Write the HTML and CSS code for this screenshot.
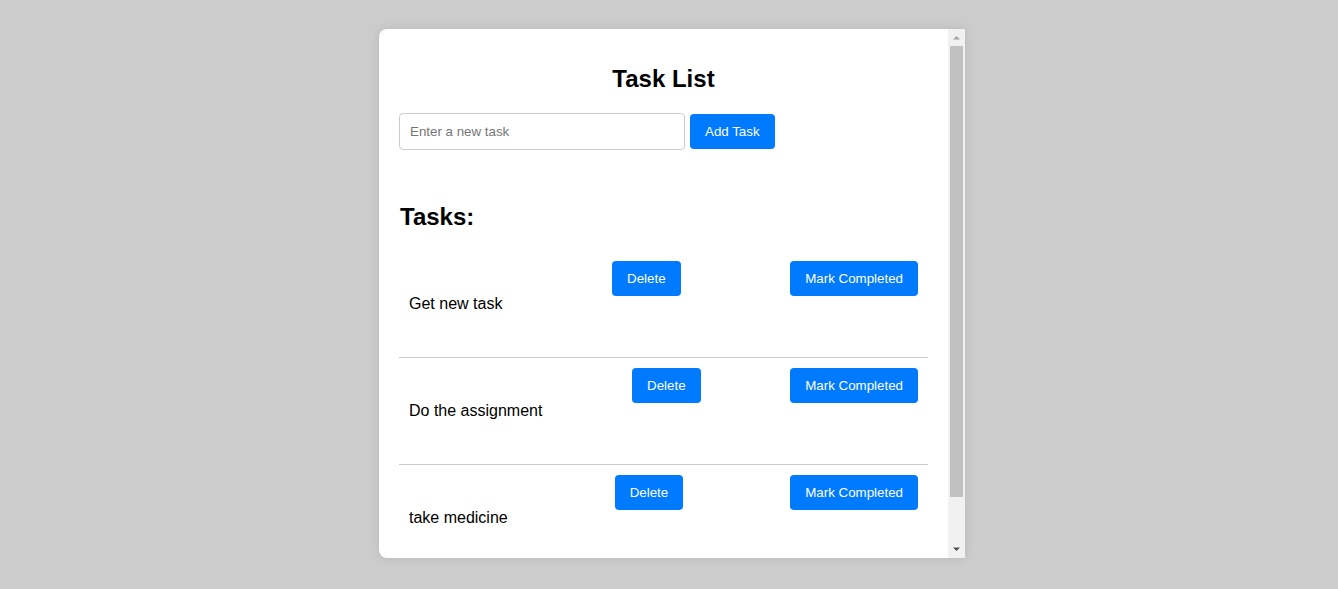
FILE: index.html
```html
<!DOCTYPE html>
<html lang="en">
<head>
<meta charset="utf-8">
<title>Task List</title>
<link rel="stylesheet" href="styles.css">
</head>
<body>
<div class="card">
  <div class="card-body">
    <h1 class="title">Task List</h1>
    <div class="add-row">
      <input class="task-input" type="text" placeholder="Enter a new task">
      <button class="btn">Add Task</button>
    </div>
    <h2 class="subtitle">Tasks:</h2>
    <ul class="task-list">
      <li class="task">
        <span class="task-text">Get new task</span>
        <button class="btn">Delete</button>
        <button class="btn">Mark Completed</button>
      </li>
      <li class="task">
        <span class="task-text">Do the assignment</span>
        <button class="btn">Delete</button>
        <button class="btn">Mark Completed</button>
      </li>
      <li class="task">
        <span class="task-text">take medicine</span>
        <button class="btn">Delete</button>
        <button class="btn">Mark Completed</button>
      </li>
    </ul>
  </div>
  <div class="scrollbar" aria-hidden="true">
    <div class="sb-button">
      <svg width="9" height="5" viewBox="0 0 9 5"><path d="M1 4.5 L4.5 1 L8 4.5 Z" fill="#a3a3a3"/></svg>
    </div>
    <div class="sb-track">
      <div class="sb-thumb"></div>
    </div>
    <div class="sb-button">
      <svg width="9" height="5" viewBox="0 0 9 5"><path d="M1 0.5 L4.5 4 L8 0.5 Z" fill="#505050"/></svg>
    </div>
  </div>
</div>
</body>
</html>
```
FILE: styles.css
```css
html, body {
  margin: 0;
  height: 100%;
}
body {
  background: #cccccc;
  font-family: "Liberation Sans", Arial, sans-serif;
  display: flex;
  justify-content: center;
  align-items: flex-start;
  padding: 29px 0 0 6px;
  box-sizing: border-box;
}
.card {
  width: 586px;
  height: 529px;
  display: flex;
  background: #ffffff;
  border-radius: 8px 0 0 8px;
  box-shadow: 0 0 10px rgba(0, 0, 0, 0.1);
  overflow: hidden;
}
.card-body {
  flex: 1;
  min-width: 0;
  padding: 20px;
  overflow: hidden;
}
.scrollbar {
  width: 17px;
  display: flex;
  flex-direction: column;
  background: #f1f1f1;
}
.sb-button {
  height: 17px;
  display: flex;
  align-items: center;
  justify-content: center;
}
.sb-track {
  flex: 1;
  padding: 0 2px;
}
.sb-thumb {
  height: 451px;
  background: #c1c1c1;
}
.title {
  font-size: 24px;
  font-weight: bold;
  text-align: center;
  margin: 16px 0 20px;
  line-height: 28px;
  color: #000;
}
.add-row {
  display: flex;
  align-items: center;
  gap: 5px;
}
.task-input {
  width: 286px;
  height: 37px;
  box-sizing: border-box;
  padding: 10px;
  border: 1px solid #cccccc;
  border-radius: 4px;
  font-family: "Liberation Sans", Arial, sans-serif;
  font-size: 13.333px;
  color: #000;
  outline: none;
}
.task-input::placeholder {
  color: #757575;
}
.btn {
  background: #007bff;
  color: #ffffff;
  border: none;
  border-radius: 4px;
  padding: 10px 15px;
  height: 35px;
  box-sizing: border-box;
  font-family: "Liberation Sans", Arial, sans-serif;
  font-size: 13.333px;
  line-height: 15px;
  cursor: pointer;
  white-space: nowrap;
}
.subtitle {
  font-size: 24px;
  font-weight: bold;
  line-height: 28px;
  margin: 53px 0 20px 1px;
  color: #000;
}
.task-list {
  list-style: none;
  margin: 0 0 18px;
  padding: 0;
}
.task {
  display: flex;
  justify-content: space-between;
  align-items: flex-start;
  padding: 10px;
  height: 107px;
  box-sizing: border-box;
  border-bottom: 1px solid #cccccc;
}
.task-text {
  align-self: center;
  font-size: 16px;
  color: #000;
  margin-top: -1px;
}
```
